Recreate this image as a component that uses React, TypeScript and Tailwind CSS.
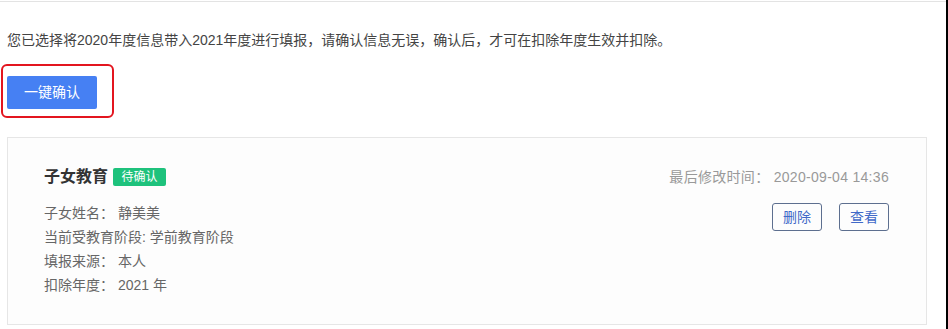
import React from 'react';

const rows = [
  { label: '子女姓名：', value: '静美美' },
  { label: '当前受教育阶段:', value: '学前教育阶段' },
  { label: '填报来源：', value: '本人' },
  { label: '扣除年度：', value: '2021 年' },
];

export default function App() {
  return (
    <div
      className="relative w-[948px] h-[329px] bg-white overflow-hidden border-r-2 border-black"
      style={{ fontFamily: '"Liberation Sans", "Noto Sans CJK SC", sans-serif' }}
    >
      <div className="mt-px border-t border-[#e3e3e3]" />

      {/* 提示文字 */}
      <p className="mt-[28px] pl-[7px] text-[14px] leading-[20px] text-[#444]">
        您已选择将2020年度信息带入2021年度进行填报，请确认信息无误，确认后，才可在扣除年度生效并扣除。
      </p>

      {/* 一键确认 */}
      <div className="mt-[26px] pl-[7px]">
        <button className="w-[90px] h-[33px] rounded-[2px] bg-[#4680f3] text-white text-[14px]">
          一键确认
        </button>
      </div>

      {/* 红框标注 */}
      <div className="absolute left-[1px] top-[64px] w-[113px] h-[54px] border-2 border-[#e3151f] rounded-[6px]" />

      {/* 卡片 */}
      <div className="mt-[28px] ml-[7px] w-[920px] h-[188px] border border-[#e6e6e6] bg-[#fdfdfd] flex justify-between pl-[36px] pr-[37px] pt-[29px]">
        <div>
          <div className="flex items-center gap-[5px] h-[20px]">
            <span className="text-[16px] font-bold text-[#333]">子女教育</span>
            <span className="h-[18px] w-[53px] flex items-center justify-center rounded-[2px] bg-[#1ec27c] text-white text-[12px]">
              待确认
            </span>
          </div>
          <ul className="mt-[14px]">
            {rows.map((r) => (
              <li key={r.label} className="text-[14px] leading-[24px] text-[#666]">
                {r.label} {r.value}
              </li>
            ))}
          </ul>
        </div>
        <div className="flex flex-col items-end">
          <div className="h-[20px] leading-[20px] text-[14px] text-[#999] tracking-[0.3px]">
            最后修改时间： 2020-09-04 14:36
          </div>
          <div className="mt-[16px] flex gap-[17px]">
            <button className="w-[50px] h-[28px] rounded-[3px] border border-[#5d6f8f] text-[#4169c8] text-[14px]">
              删除
            </button>
            <button className="w-[50px] h-[28px] rounded-[3px] border border-[#5d6f8f] text-[#4169c8] text-[14px]">
              查看
            </button>
          </div>
        </div>
      </div>
    </div>
  );
}
